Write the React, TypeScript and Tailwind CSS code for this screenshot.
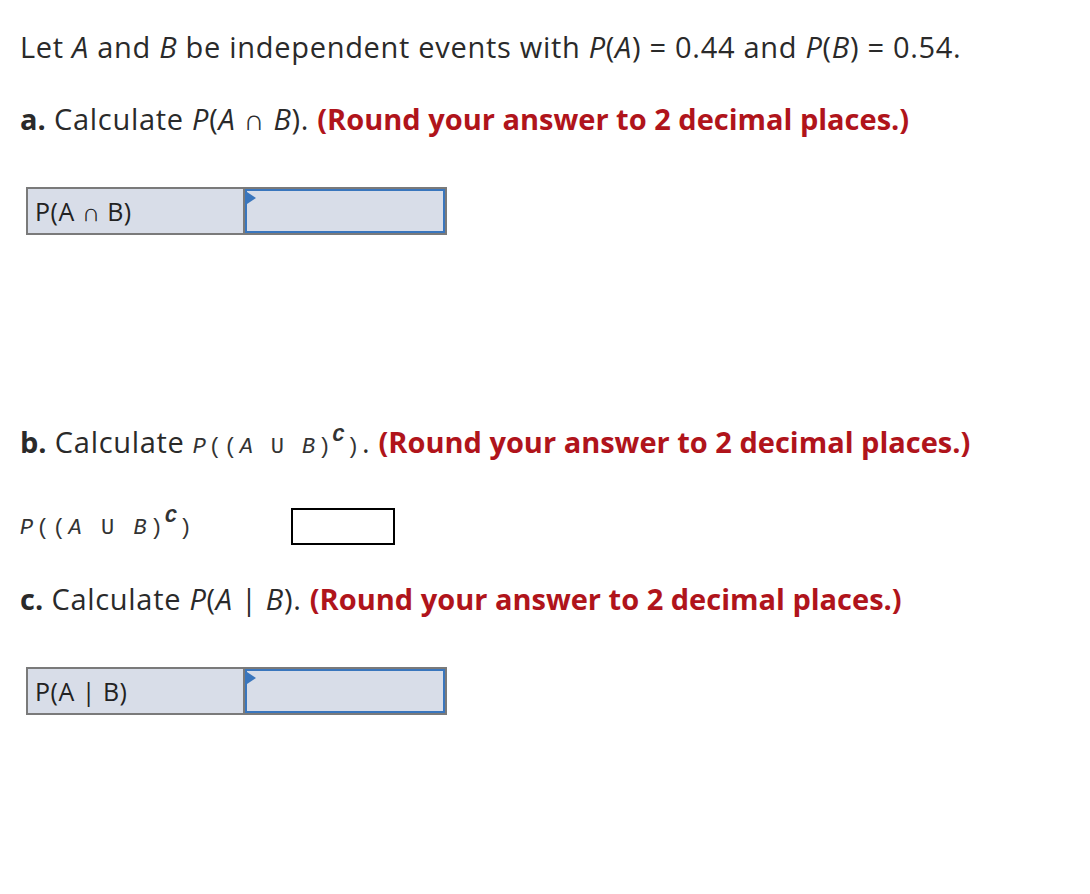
import React from "react";

const sans = "font-['Open_Sans','Liberation_Sans',sans-serif]";
const mono = "font-['Liberation_Mono','Courier_New',monospace]";

function Hint() {
  return (
    <span className="font-bold tracking-normal text-[#b0141b]">(Round your answer to 2 decimal places.)</span>
  );
}

function AnswerRow({ label }: { label: string }) {
  return (
    <div className="ml-[26px] flex h-[48px] w-[421px] border-2 border-[#7a7a7a] bg-[#d8dde8]">
      <div className={`flex w-[217px] items-center border-r-2 border-[#7a7a7a] pl-[7px] text-[25px] tracking-[0.5px] text-[#222] ${sans}`}>
        {label}
      </div>
      <div className="relative flex-1 border-2 border-[#3a76bd] bg-[#d8dde8]">
        <span className="absolute left-0 top-[1px] h-0 w-0 border-y-[6px] border-l-[9px] border-y-transparent border-l-[#3a76bd]" />
      </div>
    </div>
  );
}

function Comp({ wide }: { wide?: boolean }) {
  return (
    <span className={`${mono} text-[22px] text-[#333] ${wide ? "tracking-[3px]" : "tracking-[2.4px]"}`}>
      <i>P</i>((<i>A</i> U <i>B</i>)
      <sup className="-top-[12px] -ml-[1px] text-[20px] font-bold italic tracking-normal">C</sup>
      <span className="ml-[2px]">)</span>
    </span>
  );
}

export default function App() {
  return (
    <div className={`min-h-screen bg-white pt-[31px] text-[#2a2a2a] ${sans} text-[29px] tracking-[0.7px] leading-[32px]`}>
      <p className="pl-[20px]">
        Let <i>A</i> and <i>B</i> be independent events with <i>P</i>(<i>A</i>) = 0.44 and <i>P</i>(<i>B</i>) = 0.54.
      </p>
      <p className="mt-[40px] pl-[20px]">
        <b className="tracking-normal">a.</b> Calculate <i>P</i>(<i>A</i> ∩ <i>B</i>). <Hint />
      </p>
      <div className="mt-[52px]">
        <AnswerRow label="P(A ∩ B)" />
      </div>
      <p className="mt-[191px] pl-[20px]">
        <b className="tracking-normal">b.</b> Calculate <Comp />. <Hint />
      </p>
      <div className="mt-[43px] flex items-center pl-[20px]">
        <span className="w-[271px]">
          <Comp wide />
        </span>
        <div className="h-[37px] w-[104px] border-2 border-black bg-white" />
      </div>
      <p className="mt-[38px] pl-[20px]">
        <b className="tracking-normal">c.</b> Calculate <i>P</i>(<i>A</i> | <i>B</i>). <Hint />
      </p>
      <div className="mt-[52px]">
        <AnswerRow label="P(A | B)" />
      </div>
    </div>
  );
}
